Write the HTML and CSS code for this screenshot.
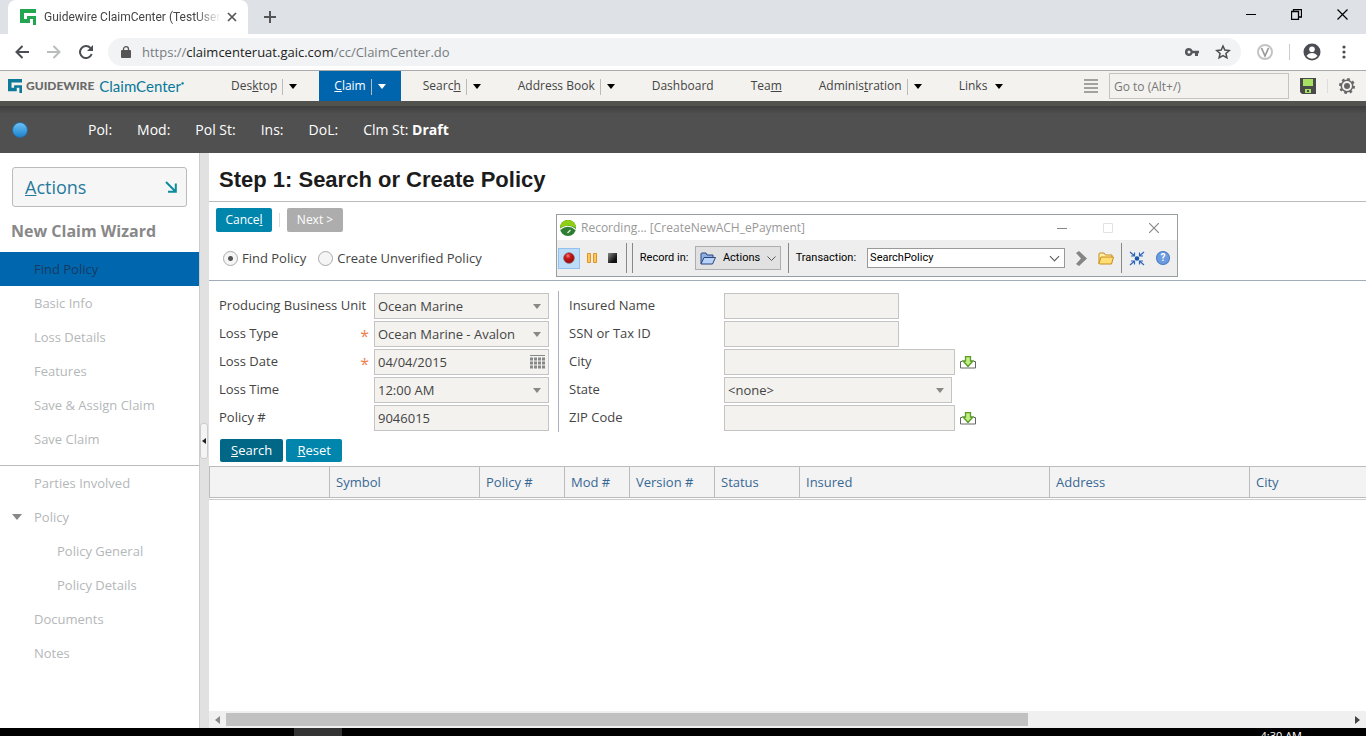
FILE: index.html
```html
<!DOCTYPE html>
<html lang="en">
<head>
<meta charset="utf-8">
<title>Guidewire ClaimCenter</title>
<link rel="stylesheet" href="styles.css">
</head>
<body>
<div class="tabstrip">
  <div class="tab">
    <svg class="tab-logo" width="16" height="16" viewBox="0 0 16 16"><path fill="#22a651" d="M0 0h16v4H4v6h3V7h9v9h-3v-6h-3v4H0z"/></svg>
    <span class="tab-title">Guidewire ClaimCenter (TestUser</span>
    <button class="plain" aria-label="Close tab"><svg width="10" height="10" viewBox="0 0 10 10"><path d="M1 1l8 8M9 1l-8 8" stroke="#555" stroke-width="1.700"/></svg></button>
  </div>
  <button class="plain new-tab" aria-label="New tab"><svg width="12" height="12" viewBox="0 0 12 12"><path d="M6 0v12M0 6h12" stroke="#555" stroke-width="2"/></svg></button>
  <div class="window-buttons">
    <button class="plain" aria-label="Minimize"><svg width="10" height="11" viewBox="0 0 10 11"><path d="M0 5.500h10" stroke="#000"/></svg></button>
    <button class="plain" aria-label="Restore"><svg width="11" height="11" viewBox="0 0 11 11"><path d="M.5 2.500h7v8h-7zM2.500 2.500v-2h8v7.500h-3" fill="none" stroke="#000" stroke-width="1.300"/></svg></button>
    <button class="plain" aria-label="Close"><svg width="11" height="11" viewBox="0 0 11 11"><path d="M.5.5l10 10M10.500.5l-10 10" stroke="#000" stroke-width="1.200"/></svg></button>
  </div>
</div>
<div class="toolbar">
  <button class="plain" aria-label="Back"><svg width="14" height="14" viewBox="0 0 14 14"><path d="M14 7H2M7.500 1L1.500 7l6 6" fill="none" stroke="#4a4d51" stroke-width="2"/></svg></button>
  <button class="plain" aria-label="Forward"><svg width="14" height="14" viewBox="0 0 14 14"><path d="M0 7h12M6.500 1l6 6-6 6" fill="none" stroke="#babcbe" stroke-width="2"/></svg></button>
  <button class="plain" aria-label="Reload"><svg width="14" height="14" viewBox="0 0 14 14"><path d="M12.700 9A6 6 0 1 1 11.500 3" fill="none" stroke="#4a4d51" stroke-width="2"/><path d="M14 0v6H8z" fill="#4a4d51"/></svg></button>
  <div class="omnibox">
    <svg width="10" height="12" viewBox="0 0 10 12"><path fill="#555" d="M1 4h8q1 0 1 1v6q0 1-1 1H1q-1 0-1-1V5q0-1 1-1z"/><path d="M2.500 5V3a2.500 2.300 0 0 1 5 0v2" fill="none" stroke="#555" stroke-width="1.300"/></svg>
    <span class="url">https://<b>claimcenteruat.gaic.com</b>/cc/ClaimCenter.do</span>
    <button class="plain" aria-label="Passwords"><svg width="14" height="8" viewBox="0 0 14 8"><path fill="#55585c" fill-rule="evenodd" d="M4 0a4 4 0 0 1 3.700 2.700H14v2.600h-1V8h-3V5.300H7.700A4 4 0 1 1 4 0zm0 2.500a1.500 1.500 0 1 0 0 3 1.500 1.500 0 0 0 0-3z"/></svg></button>
    <button class="plain" aria-label="Bookmark"><svg width="16" height="16" viewBox="0 0 16 16"><path d="M8 2l1.800 4.100 4.400.4-3.300 2.900 1 4.400L8 11.500l-3.900 2.300 1-4.400-3.300-2.900 4.400-.4z" fill="none" stroke="#4a4d51" stroke-width="1.500"/></svg></button>
  </div>
  <button class="plain ext" aria-label="Extension"><svg width="16" height="16" viewBox="0 0 16 16"><circle cx="8" cy="8" r="7" fill="none" stroke="#c4c4c4" stroke-width="2"/><path d="M4.500 4L8 12l3.500-8" fill="none" stroke="#999" stroke-width="1.700"/></svg></button>
  <span class="bar-sep"></span>
  <button class="plain user" aria-label="Profile"><svg width="18" height="18" viewBox="0 0 18 18"><circle cx="9" cy="9" r="8.500" fill="#4a4d51"/><circle cx="9" cy="6.300" r="2.800" fill="#fff"/><path d="M3.500 13q2-3 5.500-3t5.500 3q-2 2.700-5.500 2.700T3.500 13z" fill="#fff"/></svg></button>
  <button class="plain" aria-label="Menu"><svg width="4" height="14" viewBox="0 0 4 14"><g fill="#4a4d51"><circle cx="2" cy="2" r="1.600"/><circle cx="2" cy="7" r="1.600"/><circle cx="2" cy="12" r="1.600"/></g></svg></button>
</div>
<header class="app-bar">
  <div class="brand">
    <svg width="14" height="14" viewBox="0 0 16 16"><path fill="#0e7a99" d="M0 0h16v4H4v6h3V7h9v9h-3v-6h-3v4H0z"/></svg>
    <span class="brand-name">GUIDEWIRE</span><span class="brand-product">ClaimCenter<sup>●</sup></span>
  </div>
  <nav class="menu">
    <a href="#" class="menu-item split">Des<u>k</u>top<i class="caret"></i></a>
    <a href="#" class="menu-item split current"><span><u>C</u>laim</span><i class="caret"></i></a>
    <a href="#" class="menu-item split">Searc<u>h</u><i class="caret"></i></a>
    <a href="#" class="menu-item split">Address Book<i class="caret"></i></a>
    <a href="#" class="menu-item">Dashboard</a>
    <a href="#" class="menu-item">Tea<u>m</u></a>
    <a href="#" class="menu-item split">Adminis<u>t</u>ration<i class="caret"></i></a>
    <a href="#" class="menu-item">Links<i class="caret"></i></a>
  </nav>
  <div class="tools">
    <svg width="14" height="14" viewBox="0 0 14 14"><path d="M0 1h14M0 5h14M0 9h14M0 13h14" stroke="#888" stroke-width="1.500"/></svg>
    <input class="goto" type="text" placeholder="Go to (Alt+/)" aria-label="Go to">
    <button class="plain" aria-label="Save"><svg width="16" height="16" viewBox="0 0 16 16"><path fill="#4a4a4a" d="M0 0h16v16H2l-2-2z"/><path fill="#a8e063" d="M3 1h10v7H3zM5 11h6v4H5z"/><path fill="#4a4a4a" d="M7 12h2v2H7z"/></svg></button>
    <span class="tool-sep"></span>
    <button class="plain" aria-label="Settings"><svg width="16" height="16" viewBox="0 0 16 16"><circle cx="8" cy="8" r="7" fill="none" stroke="#666" stroke-width="2" stroke-dasharray="2.700 2.800"/><circle cx="8" cy="8" r="5.700" fill="none" stroke="#666" stroke-width="1.500"/><circle cx="8" cy="8" r="3" fill="#666"/></svg></button>
  </div>
</header>
<div class="info-bar">
  <span class="dot"></span>
  <span>Pol:</span><span>Mod:</span><span>Pol St:</span><span>Ins:</span><span>DoL:</span><span>Clm St: <b>Draft</b></span>
</div>
<div class="body">
  <aside class="sidebar">
    <button class="actions"><span><u>A</u>ctions</span><svg width="12" height="12" viewBox="0 0 12 12"><path d="M1 1l9 9M10.800 2.500v8.300H3" fill="none" stroke="#0c8c9c" stroke-width="2"/></svg></button>
    <h2>New Claim Wizard</h2>
    <nav class="steps">
      <a href="#" class="current">Find Policy</a>
      <a href="#">Basic Info</a>
      <a href="#">Loss Details</a>
      <a href="#">Features</a>
      <a href="#">Save &amp; Assign Claim</a>
      <a href="#">Save Claim</a>
    </nav>
    <nav class="steps lower">
      <a href="#">Parties Involved</a>
      <a href="#" class="open">Policy</a>
      <a href="#" class="child">Policy General</a>
      <a href="#" class="child">Policy Details</a>
      <a href="#">Documents</a>
      <a href="#">Notes</a>
    </nav>
  </aside>
  <div class="splitter"><button class="plain grip" aria-label="Collapse sidebar"><svg width="4" height="6" viewBox="0 0 4 6"><path d="M4 0v6L0 3z" fill="#222"/></svg></button></div>
  <main class="content">
    <h1>Step 1: Search or Create Policy</h1>
    <div class="wizard-head">
      <div class="button-row">
        <button class="btn">Cance<u>l</u></button><span class="btn-sep"></span><button class="btn off">Next &gt;</button>
      </div>
      <div class="radio-row">
        <label><input type="radio" name="mode" checked>Find Policy</label>
        <label><input type="radio" name="mode">Create Unverified Policy</label>
      </div>
    </div>
    <form class="criteria">
      <div class="fields left">
        <label for="unit">Producing Business Unit</label><span class="pick"><select id="unit"><option>Ocean Marine</option></select></span>
        <label for="type">Loss Type<em>*</em></label><span class="pick"><select id="type"><option>Ocean Marine - Avalon</option></select></span>
        <label for="date">Loss Date<em>*</em></label><span class="date"><input id="date" type="text" value="04/04/2015"><svg width="15" height="14" viewBox="0 0 15 14"><path d="M0 .5h15" stroke="#888"/><path d="M0 4h15M0 8h15M0 12h15" stroke="#888" stroke-width="3" stroke-dasharray="3 1"/></svg></span>
        <label for="time">Loss Time</label><span class="pick"><select id="time"><option>12:00 AM</option></select></span>
        <label for="policy">Policy #</label><input id="policy" type="text" value="9046015">
      </div>
      <div class="fields right">
        <label for="insured">Insured Name</label><span><input id="insured" type="text"></span>
        <label for="ssn">SSN or Tax ID</label><span><input id="ssn" type="text"></span>
        <label for="city">City</label><span class="fill"><input class="wide" id="city" type="text"><button type="button" class="plain" aria-label="Autofill city"><svg width="16" height="13" viewBox="0 0 16 13"><path d="M2.500 5.500h-2v6.500h15V5.500h-2" fill="none" stroke="#666"/><path d="M5.500.6h5V5H13L8 10.500 3 5h2.500z" fill="#c0ec82" stroke="#5a9a28" stroke-width="1.300"/></svg></button></span>
        <label for="state">State</label><span class="pick state"><select id="state"><option>&lt;none&gt;</option></select></span>
        <label for="zip">ZIP Code</label><span class="fill"><input class="wide" id="zip" type="text"><button type="button" class="plain" aria-label="Autofill ZIP code"><svg width="16" height="13" viewBox="0 0 16 13"><path d="M2.500 5.500h-2v6.500h15V5.500h-2" fill="none" stroke="#666"/><path d="M5.500.6h5V5H13L8 10.500 3 5h2.500z" fill="#c0ec82" stroke="#5a9a28" stroke-width="1.300"/></svg></button></span>
      </div>
    </form>
    <div class="search-row"><button class="btn dark"><u>S</u>earch</button><button class="btn"><u>R</u>eset</button></div>
    <div class="results">
      <table>
        <colgroup><col class="c120"><col class="c150"><col class="c85"><col class="c65"><col class="c85"><col class="c85"><col class="c250"><col class="c200"><col></colgroup>
        <thead><tr><td></td><th>Symbol</th><th>Policy #</th><th>Mod #</th><th>Version #</th><th>Status</th><th>Insured</th><th>Address</th><th>City</th></tr></thead>
      </table>
    </div>
    <div class="scrollbar">
      <svg width="5" height="8" viewBox="0 0 5 8"><path d="M5 0v8L0 4z" fill="#888"/></svg>
      <div class="track"><div class="thumb"></div></div>
      <svg width="5" height="8" viewBox="0 0 5 8"><path d="M0 0v8l5-4z" fill="#444"/></svg>
    </div>
  </main>
</div>
<footer class="taskbar"><span class="task"></span><span class="clock">4:30 AM</span></footer>

<section class="recorder" aria-label="Recorder">
  <div class="rec-title">
    <svg width="16" height="16" viewBox="0 0 16 16"><circle cx="8" cy="8" r="8" fill="#2e7d32"/><path d="M0 8a8 8 0 0 1 16 0q-7-5-16 0z" fill="#8fce10"/><path d="M0 8.500q8-5.500 16 .5l-.3 1.300Q8 3.500.3 10z" fill="#fff"/><path d="M7.500 13l3-3" stroke="#dceedd" stroke-width="1.300"/></svg>
    <span class="rec-name">Recording... [CreateNewACH_ePayment]</span>
    <button class="plain" aria-label="Minimize recorder"><svg width="10" height="10" viewBox="0 0 10 10"><path d="M0 5.500h10" stroke="#888"/></svg></button>
    <button class="plain" aria-label="Maximize recorder"><svg width="10" height="10" viewBox="0 0 10 10"><path d="M.5.5h9v9h-9z" fill="none" stroke="#e2e2e2"/></svg></button>
    <button class="plain" aria-label="Close recorder"><svg width="10" height="10" viewBox="0 0 10 10"><path d="M0 0l10 10M10 0L0 10" stroke="#888" stroke-width="1.200"/></svg></button>
  </div>
  <div class="rec-tools">
    <button class="rec-on" aria-label="Record"><svg width="12" height="12" viewBox="0 0 12 12"><defs><radialGradient id="red" cx=".4" cy=".3"><stop offset="0" stop-color="#f08080"/><stop offset=".5" stop-color="#d01818"/><stop offset="1" stop-color="#a01010"/></radialGradient></defs><circle cx="6" cy="6" r="5.300" fill="url(#red)" stroke="#8d5555" stroke-width=".7"/></svg></button>
    <button class="plain" aria-label="Pause"><svg width="10" height="10" viewBox="0 0 10 10"><path d="M.5.5h3v9h-3zM6.500.5h3v9h-3z" fill="#ffc94d" stroke="#e0922c"/></svg></button>
    <button class="plain spaced" aria-label="Stop"><svg width="9" height="10" viewBox="0 0 9 10"><defs><linearGradient id="blk" x2="1" y2="1"><stop stop-color="#888"/><stop offset=".7" stop-color="#111"/></linearGradient></defs><path d="M0 0h9v10H0z" fill="url(#blk)"/></svg></button>
    <span class="rec-sep double"></span>
    <span>Record in:</span>
    <button class="rec-menu"><svg width="16" height="13" viewBox="0 0 16 13"><path d="M1 12V2q0-1 1-1h4l1 2h6v3" fill="#8fb2e6" stroke="#29457d"/><path d="M1 12l3-6.500h11.500L12.500 12z" fill="#b9d3f8" stroke="#29457d"/></svg><span>Actions</span><svg width="9" height="5" viewBox="0 0 9 5"><path d="M.5.5l4 4 4-4" fill="none" stroke="#555"/></svg></button>
    <span class="rec-sep"></span>
    <label for="trans">Transaction:</label>
    <span class="trans spaced"><select id="trans"><option>SearchPolicy</option></select></span>
    <button class="plain spaced" aria-label="Go"><svg width="11" height="15" viewBox="0 0 11 15"><path d="M0 2l3-2 8 7.500-8 7.500-3-2 5-5.500z" fill="#858585"/></svg></button>
    <button class="plain spaced" aria-label="Open"><svg width="16" height="13" viewBox="0 0 16 13"><path d="M1 12V2q0-1 1-1h4l1.500 2H14v2" fill="#fff1a8" stroke="#c98a1c"/><path d="M1 11.500L3 5h12.500l-2 7H1.500z" fill="#ffdf73" stroke="#c98a1c"/></svg></button>
    <span class="rec-sep"></span>
    <button class="plain" aria-label="Collapse"><svg width="16" height="15" viewBox="0 0 16 15"><circle cx="8" cy="7.500" r="2.300" fill="#1858a8"/><path d="M1 1l4 3.500M15 1l-4 3.500M1 14l4-3.500M15 14l-4-3.500M2 5h3.500V1.500M14 5h-3.500V1.500M2 10h3.500v3.500M14 10h-3.500v3.500" fill="none" stroke="#2d65bd" stroke-width="1.200"/></svg></button>
    <button class="help spaced" aria-label="Help">?</button>
  </div>
</section>
</body>
</html>
```

FILE: styles.css
```css
* { box-sizing: border-box; }
body {
  margin: 0; height: 100vh; display: flex; flex-direction: column; overflow: hidden;
  position: relative; background: #fff; color: #444;
  font: 13px/18px "Open Sans", "Noto Sans", sans-serif;
}
svg { display: block; flex: none; }
a { color: inherit; text-decoration: none; }
button, input, select { font: inherit; color: inherit; margin: 0; }
.plain { border: 0; padding: 0; background: none; display: flex; align-items: center; justify-content: center; }

/* browser frame */
.tabstrip { flex: none; height: 34px; background: #dee1e6; display: flex; align-items: center; }
.tab { align-self: stretch; width: 240px; margin-left: 8px; padding: 0 11px 0 12px; background: #fff; border-radius: 8px 8px 0 0; display: flex; align-items: center; }
.tab-title { flex: 1; margin: 0 6px 0 8px; font-family: Roboto, sans-serif; font-size: 12px; white-space: nowrap; -webkit-mask-image: linear-gradient(90deg, #000 85%, transparent); mask-image: linear-gradient(90deg, #000 85%, transparent); }
.new-tab { margin-left: 16px; }
.window-buttons { margin-left: auto; padding: 0 18px 6px 0; display: flex; gap: 35px; }
.toolbar { flex: none; height: 37px; padding: 0 20px 0 15px; border-bottom: 1px solid #aaa; display: flex; align-items: center; gap: 18px; }
.omnibox { flex: 1; height: 28px; margin-left: -3px; padding: 0 10px 0 13px; background: #f1f3f4; border-radius: 14px; display: flex; align-items: center; gap: 16px; }
.url { flex: 1; margin-left: -5px; color: #777b80; white-space: nowrap; }
.url b { font-weight: 400; color: #222; }
.ext { margin: 0 -2px; }
.bar-sep { width: 1px; height: 16px; background: #ccc; }
.user { margin: 0 3px 0 -5px; }

/* application bar */
.app-bar { flex: none; height: 30px; background: #f3f2ef; display: flex; align-items: center; font-size: 12px; }
.brand { width: 207px; padding-left: 8px; display: flex; align-items: center; font-family: Lato, sans-serif; white-space: nowrap; }
.brand-name { margin: 0 5px 0 4px; font-size: 12px; font-weight: 900; color: #6a6a6a; }
.brand-product { font-size: 15px; color: #08789b; }
.brand-product sup { font-size: 5px; vertical-align: 7px; line-height: 0; }
.menu { height: 100%; padding-left: 9px; display: flex; gap: 7px; }
.menu-item { padding: 0 15px; display: flex; align-items: center; white-space: nowrap; }
.menu-item.current { background: #0065ad; color: #fff; }
.caret { border: 4px solid transparent; border-top: 5px solid #000; border-bottom: 0; margin-left: 8px; }
.current .caret { border-top-color: #fff; }
.split .caret { margin-left: 12px; position: relative; }
.split .caret::before { content: ""; position: absolute; left: -11px; top: -10px; height: 16px; border-left: 1px solid #bbb; }
.tools { margin-left: auto; padding-right: 11px; display: flex; align-items: center; gap: 11px; }
.goto { width: 180px; height: 26px; padding: 0 4px; border: 1px solid #c4c4c4; background: #f3f2ef; }
.goto::placeholder { color: #777; opacity: 1; }
.tool-sep { width: 1px; height: 14px; background: #ddd; }
.info-bar { flex: none; height: 52px; padding: 6px 12px 0; display: flex; align-items: center; gap: 25px; background: linear-gradient(#52524e 5px, #3d3d3d 5px, #505050 13px); color: #fff; font-size: 14px; }
.dot { width: 16px; height: 16px; margin-right: 35px; border-radius: 50%; border: 1px solid #2a6d9e; background: linear-gradient(#6dc0f4, #1b83ce); }

/* sidebar */
.body { flex: 1; min-height: 0; display: flex; }
.sidebar { flex: none; width: 199px; padding-top: 14px; }
.actions { width: 175px; height: 40px; margin-left: 12px; padding: 0 9px 0 12px; border: 1px solid #bbb; border-radius: 3px; background: #f6f6f6; color: #267a9e; font-size: 18px; display: flex; align-items: center; justify-content: space-between; }
h2 { margin: 13px 0 10px 11px; font-size: 16px; line-height: 22px; color: #888; }
.steps a { height: 34px; padding-left: 34px; display: flex; align-items: center; color: #b4b7b9; }
.steps a.current { background: #0067ae; color: #173a63; }
.steps a.child { padding-left: 57px; }
.steps a.open { padding-left: 12px; }
.open::before { content: ""; border: 5px solid transparent; border-top: 6px solid #888; border-bottom: 0; margin-right: 12px; }
.lower { margin-top: 9px; border-top: 1px solid #bbb; }
.splitter { flex: none; width: 10px; border-left: 1px solid #ccc; background: #e1e1e1; display: flex; align-items: center; }
.grip { width: 8px; height: 36px; border: 1px solid #ccc; border-radius: 3px; background: #f4f4f4; }

/* content */
.content { flex: 1; min-width: 0; display: flex; flex-direction: column; }
h1 { margin: 0; padding: 3px 10px 0; height: 49px; border-bottom: 1px solid #bbb; font: bold 22px/48px "Liberation Sans", Arial, sans-serif; color: #1c1c1c; white-space: nowrap; }
.wizard-head { padding: 6px 7px 13px; border-bottom: 1px solid #a3adb8; }
.button-row { display: flex; align-items: center; gap: 7px; }
.btn { min-width: 56px; height: 24px; padding: 0 9px; border: 0; border-radius: 2px; background: #0086ad; color: #fff; font-size: 12px; line-height: 20px; }
.btn.off { background: #adadad; }
.btn-sep { width: 1px; height: 14px; background: #ddd; }
.radio-row { display: flex; gap: 12px; margin: 17px 0 0 7px; }
.radio-row label { display: flex; align-items: center; gap: 4px; }
.radio-row input { appearance: none; width: 15px; height: 15px; border: 1px solid #aaa; border-radius: 50%; background: #f5f5f5; }
.radio-row input:checked { background: radial-gradient(circle, #555 2px, #f5f5f5 3px); }
.criteria { display: flex; padding: 10px 10px 0; }
.fields { display: grid; grid-auto-rows: 28px; align-items: center; }
.left { grid-template-columns: 155px 175px; padding-top: 1px; }
.right { grid-template-columns: 155px auto; padding: 1px 0 0 10px; margin-left: 9px; border-left: 1px solid #a9b0c0; }
.fields label { display: flex; justify-content: space-between; padding: 0 5px 2px 0; white-space: nowrap; }
.fields em { color: #f08050; font-size: 16px; font-style: normal; line-height: 24px; height: 18px; }
.fields input, .fields select { display: block; width: 175px; height: 26px; padding: 0 3px; border: 1px solid #c4c4c4; border-radius: 0; background: #f3f2ef; }
.fields select { appearance: none; padding-right: 20px; }
.pick, .date { position: relative; width: 175px; }
.pick::after { content: ""; position: absolute; right: 8px; top: 11px; border: 4px solid transparent; border-top: 5px solid #888; border-bottom: 0; }
.date svg { position: absolute; right: 4px; top: 6px; }
.state, .fields .state select { width: 228px; }
.fields .wide { width: 231px; }
.fill { display: flex; align-items: center; gap: 5px; }
.search-row { display: flex; gap: 3px; padding: 7px 11px 4px; }
.search-row .btn { padding: 0 11px 2px; font-size: 13px; height: 23px; }
.btn.dark { background: #006787; }
.results { flex: 1; min-height: 0; overflow: hidden; }
table { width: 100%; min-width: 1157px; table-layout: fixed; border-collapse: separate; border-spacing: 0; border-bottom: 1px solid #ccc; padding-bottom: 1px; }
th, td { height: 32px; padding: 0 6px; border: solid #bbb; border-width: 1px 0 1px 1px; background: #f3f3f3; color: #376894; font-weight: 400; text-align: left; }
.c65 { width: 65px; } .c85 { width: 85px; } .c120 { width: 120px; } .c150 { width: 150px; } .c200 { width: 200px; } .c250 { width: 250px; }
.scrollbar { flex: none; height: 17px; padding: 0 6px; background: #f0f0f0; display: flex; align-items: center; gap: 6px; }
.track { flex: 1; display: flex; }
.track::after { content: ""; flex: 2; }
.thumb { flex: 5; height: 13px; background: #c1c1c1; }
.taskbar { flex: none; height: 8px; overflow: hidden; background: #000; color: #fff; display: flex; justify-content: space-between; }
.task { width: 48px; margin-left: 294px; background: #333; }
.clock { margin-right: 64px; font-size: 11px; line-height: 16px; white-space: nowrap; }

/* recorder window floating over the page */
.recorder { position: absolute; left: 556px; top: 214px; width: 622px; height: 63px; border: 1px solid #999ea3; background: #eee; color: #000; font-family: Roboto, sans-serif; font-size: 11px; display: flex; flex-direction: column; }
.rec-title { height: 25px; padding: 0 18px 0 3px; background: #fff; color: #999; font-family: "Open Sans", sans-serif; font-size: 12px; display: flex; align-items: center; gap: 36px; }
.rec-name { flex: 1; margin-left: -31px; }
.rec-tools { flex: 1; padding: 0 7px 0 1px; display: flex; align-items: center; gap: 7px; white-space: nowrap; }
.rec-on { width: 22px; height: 21px; padding: 0; border: 1px solid #93c0ec; background: #bcdcf8; display: flex; align-items: center; justify-content: center; }
.spaced { margin-left: 4px; }
.rec-sep { width: 1px; height: 30px; background: #888; }
.rec-sep.double { width: 7px; margin-left: 2px; border: solid #888; border-width: 0 1px; background: none; }
.rec-menu { width: 86px; height: 24px; padding: 0 4px; border: 1px solid #adadad; background: #e1e1e1; display: flex; align-items: center; justify-content: space-between; }
.trans { position: relative; }
.trans select { display: block; appearance: none; width: 198px; height: 20px; padding: 0 2px; border: 1px solid #999; border-radius: 0; background: #fff; }
.trans::after { content: ""; position: absolute; right: 7px; top: 5px; width: 6px; height: 6px; border: solid #555; border-width: 0 1px 1px 0; transform: rotate(45deg); }
.help { width: 14px; height: 14px; padding: 0; border: 1px solid #4a7dc4; border-radius: 50%; background: #6b9be0; color: #fff; font-size: 10px; font-weight: 700; line-height: 12px; }
```
